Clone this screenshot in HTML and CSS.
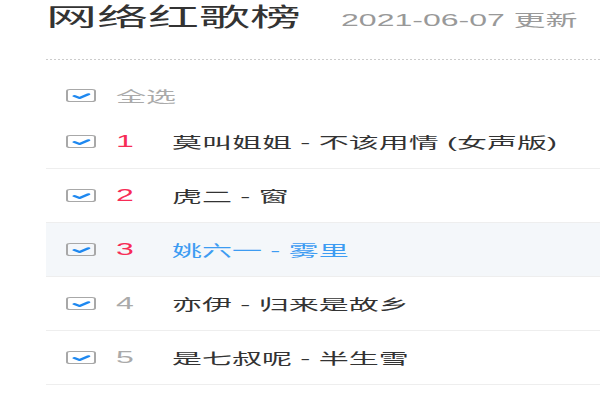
FILE: index.html
```html
<!DOCTYPE html>
<html lang="zh-CN">
<head>
    <meta charset="UTF-8">
    <title>网络红歌榜</title>
    <link rel="stylesheet" href="styles.css">
</head>
<body>

<div class="page">
    <div class="header">
        <h1 class="title">网络红歌榜</h1>
        <span class="date">2021-06-07 更新</span>
    </div>

    <div class="select-all">
        <span class="check"><svg viewBox="0 0 13 11"><path d="M3.2 6 L5.8 8 L10.2 4.2"/></svg></span>
        <span class="label">全选</span>
    </div>

    <ul class="list">
        <li class="row">
            <span class="check"><svg viewBox="0 0 13 11"><path d="M3.2 6 L5.8 8 L10.2 4.2"/></svg></span>
            <span class="rank top">1</span>
            <span class="song">莫叫姐姐 - 不该用情 (女声版)</span>
        </li>
        <li class="row">
            <span class="check"><svg viewBox="0 0 13 11"><path d="M3.2 6 L5.8 8 L10.2 4.2"/></svg></span>
            <span class="rank top">2</span>
            <span class="song">虎二 - 窗</span>
        </li>
        <li class="row active">
            <span class="check"><svg viewBox="0 0 13 11"><path d="M3.2 6 L5.8 8 L10.2 4.2"/></svg></span>
            <span class="rank top">3</span>
            <span class="song">姚六一 - 雾里</span>
        </li>
        <li class="row">
            <span class="check"><svg viewBox="0 0 13 11"><path d="M3.2 6 L5.8 8 L10.2 4.2"/></svg></span>
            <span class="rank">4</span>
            <span class="song">亦伊 - 归来是故乡</span>
        </li>
        <li class="row">
            <span class="check"><svg viewBox="0 0 13 11"><path d="M3.2 6 L5.8 8 L10.2 4.2"/></svg></span>
            <span class="rank">5</span>
            <span class="song">是七叔呢 - 半生雪</span>
        </li>
    </ul>
</div>

</body>
</html>
```

FILE: styles.css
```css
body {
    margin: 0;
    background: #fff;
    font-family: "Liberation Sans", "Noto Sans CJK SC", sans-serif;
    color: #333;
    overflow: hidden;
}
/* the shot is a narrow page stretched to twice its width */
.page {
    width: 300px;
    box-sizing: border-box;
    padding-left: 23px;
    transform: scaleX(2);
    transform-origin: 0 0;
}
.header {
    display: flex;
    align-items: baseline;
    gap: 20px;
    padding-bottom: 24px;
    border-bottom: 1px dotted #ccc;
}
.title {
    margin: 0;
    font-size: 25.5px;
    font-weight: normal;
    line-height: 35px;
    color: #333;
}
.date {
    font-size: 16px;
    color: #999;
    white-space: nowrap;
}
.select-all {
    display: flex;
    align-items: center;
    height: 28px;
    padding: 21px 0 0 10px;
    margin-bottom: 6px;
}
.label {
    font-size: 15px;
    color: #aaa;
}
.check {
    width: 13px;
    height: 11px;
    border: 1px solid #a8a8a8;
    border-radius: 2px;
    margin-right: 10px;
    display: flex;
}
.check svg {
    width: 13px;
    height: 11px;
}
.check path {
    fill: none;
    stroke: #1e88f0;
    stroke-width: 2;
    stroke-linecap: round;
    stroke-linejoin: round;
}
.list {
    list-style: none;
    margin: 0;
    padding: 0;
}
.row {
    display: flex;
    align-items: center;
    height: 53px;
    padding-left: 10px;
    border-bottom: 1px solid #eee;
}
.row.active {
    background: #f4f7fa;
}
.rank {
    width: 28px;
    font-size: 16px;
    color: #aaa;
}
.rank.top {
    color: #f72c56;
}
.song {
    font-size: 15px;
    color: #333;
    white-space: nowrap;
}
.row.active .song {
    color: #3d9cf2;
}
```
